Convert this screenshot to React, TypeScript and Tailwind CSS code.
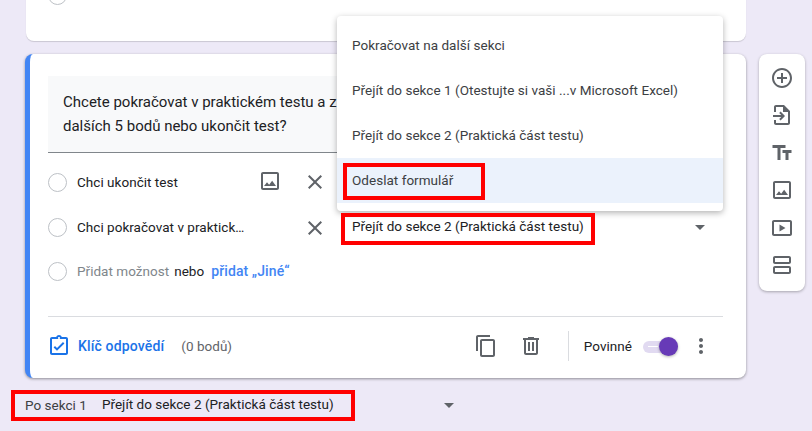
const Ic = ({ d, size = 24, className = "" }: { d: string; size?: number; className?: string }) => (
  <svg width={size} height={size} viewBox="0 0 24 24" fill="currentColor" className={"shrink-0 " + className}>
    <path d={d} />
  </svg>
);

const IMAGE = "M19 5v14H5V5h14m0-2H5c-1.1 0-2 .9-2 2v14c0 1.1.9 2 2 2h14c1.1 0 2-.9 2-2V5c0-1.1-.9-2-2-2zm-4.86 8.86l-3 3.87L9 13.14 6 17h12l-3.86-5.14z";
const CLOSE = "M19 6.41L17.59 5 12 10.59 6.41 5 5 6.41 10.59 12 5 17.59 6.41 19 12 13.41 17.59 19 19 17.59 13.41 12z";
const ADD = "M13 7h-2v4H7v2h4v4h2v-4h4v-2h-4V7zm-1-5C6.48 2 2 6.48 2 12s4.48 10 10 10 10-4.48 10-10S17.52 2 12 2zm0 18c-4.41 0-8-3.59-8-8s3.59-8 8-8 8 3.59 8 8-3.59 8-8 8z";
const IMPORT = "M14 2H6c-1.1 0-2 .9-2 2v5h2V4h7v5h5v11H6v-3H4v3c0 1.1.9 2 2 2h12c1.1 0 2-.9 2-2V8l-6-6zM3 12v2h8.2l-2 2 1.4 1.4 4.4-4.4-4.4-4.4-1.4 1.4 2 2H3z";
const TT = "M2.5 4v3h5v12h3V7h5V4h-13zm19 5h-9v3h3v7h3v-7h3V9z";
const VIDEO = "M20 4H4c-1.1 0-2 .9-2 2v12c0 1.1.9 2 2 2h16c1.1 0 2-.9 2-2V6c0-1.1-.9-2-2-2zm0 14H4V6h16v12zM9.5 8.5v7l6-3.5-6-3.5z";
const SECTION = "M19 3H5c-1.1 0-2 .9-2 2v4c0 1.1.9 2 2 2h14c1.1 0 2-.9 2-2V5c0-1.1-.9-2-2-2zm0 6H5V5h14v4zm0 4H5c-1.1 0-2 .9-2 2v4c0 1.1.9 2 2 2h14c1.1 0 2-.9 2-2v-4c0-1.1-.9-2-2-2zm0 6H5v-4h14v4z";
const COPY = "M16 1H4c-1.1 0-2 .9-2 2v14h2V3h12V1zm3 4H8c-1.1 0-2 .9-2 2v14c0 1.1.9 2 2 2h11c1.1 0 2-.9 2-2V7c0-1.1-.9-2-2-2zm0 16H8V7h11v14z";
const TRASH = "M15 4V3H9v1H4v2h1v13c0 1.1.9 2 2 2h10c1.1 0 2-.9 2-2V6h1V4h-5zm2 15H7V6h10v13zM9 8h2v9H9V8zm4 0h2v9h-2V8z";
const MORE = "M12 8c1.1 0 2-.9 2-2s-.9-2-2-2-2 .9-2 2 .9 2 2 2zm0 2c-1.1 0-2 .9-2 2s.9 2 2 2 2-.9 2-2-.9-2-2-2zm0 6c-1.1 0-2 .9-2 2s.9 2 2 2 2-.9 2-2-.9-2-2-2z";
const KEY = "M19 3h-4.18C14.4 1.84 13.3 1 12 1s-2.4.84-2.82 2H5c-1.1 0-2 .9-2 2v14c0 1.1.9 2 2 2h14c1.1 0 2-.9 2-2V5c0-1.1-.9-2-2-2zm-7 0c.55 0 1 .45 1 1s-.45 1-1 1-1-.45-1-1 .45-1 1-1zm7 16H5V5h14v14zm-1.6-9.6L16 8l-6 6-2-2-1.4 1.4L10 16.8l7.4-7.4z";

const Radio = () => <span className="w-[19px] h-[19px] rounded-full border border-[#bdc1c6] bg-white shrink-0" />;

const Caret = () => <span className="block w-0 h-0 border-x-[5px] border-x-transparent border-t-[5px] border-t-[#5f6368]" />;

const RedBox = ({ className }: { className: string }) => (
  <div className={"absolute border-[4px] border-[#ff0000] " + className} />
);

export default function App() {
  return (
    <div
      className="relative w-[812px] h-[431px] overflow-hidden bg-[#ede9f7] text-[#202124] text-[13.5px] tracking-[0.03px]"
      style={{ fontFamily: "Roboto, sans-serif" }}
    >
      <div className="flex flex-col pl-[25px] w-[812px] -mt-[20px]">
        <div className="w-[720px] h-[61px] ml-px bg-white rounded-lg shadow-[0_1px_1px_rgba(0,0,0,0.15)] pl-[22px] flex flex-col">
          <div className="flex items-center gap-[10px] h-[30px] text-[#3c4043]">
            <Radio />
            <span>Pořadové číslo aktuálního roku od roku 1900</span>
          </div>
        </div>

        <div className="mt-[13px] flex">
          <div className="w-[721px] shrink-0 h-[324px] bg-white rounded-lg shadow-[0_1px_3px_rgba(0,0,0,0.4)] border-l-[5px] border-l-[#4285f4] pl-[18px] pr-[23px] flex flex-col">
            <div className="mt-[22px] h-[77px] shrink-0 bg-[#f8f9fa] border-b border-b-[#80868b] pl-[15px] pt-[14px] text-[15px] leading-[24px] tracking-normal text-[#202124]">
              <div>Chcete pokračovat v praktickém testu a získat</div>
              <div>dalších 5 bodů nebo ukončit test?</div>
            </div>

            <div className="h-[45px] mt-[7px] flex items-center">
              <Radio />
              <span className="ml-[10px] w-[172px] whitespace-nowrap">Chci ukončit test</span>
              <Ic d={IMAGE} className="text-[#5f6368] ml-[9px] -mt-[3px]" />
              <Ic d={CLOSE} className="text-[#5f6368] ml-[21px] -mt-px" />
            </div>

            <div className="h-[45px] flex items-center">
              <Radio />
              <span className="ml-[10px] w-[169px] whitespace-nowrap">Chci pokračovat v praktick…</span>
              <Ic d={CLOSE} className="text-[#5f6368] ml-[57px]" />
              <span className="ml-[25px] -mt-[3px] w-[343px] whitespace-nowrap">Přejít do sekce 2 (Praktická část testu)</span>
              <Caret />
            </div>

            <div className="h-[44px] flex items-center -mt-px">
              <Radio />
              <span className="ml-[10px] text-[#80868b]">Přidat možnost</span>
              <span className="ml-[5px]">nebo</span>
              <span className="ml-[7px] text-[#4285f4] font-medium text-[14px] tracking-[0.1px]">přidat „Jiné“</span>
            </div>

            <div className="mt-[23px] border-t border-t-[#dadce0] flex-1 flex items-center pb-[3px] pr-[10px]">
              <Ic d={KEY} className="text-[#1a73e8] -ml-px" />
              <span className="ml-[7px] text-[#1a73e8] font-medium text-[14px] tracking-[0.15px]">Klíč odpovědí</span>
              <span className="ml-[17px] text-[#5f6368]">(0 bodů)</span>
              <div className="flex-1" />
              <Ic d={COPY} className="text-[#5f6368]" />
              <Ic d={TRASH} className="text-[#5f6368] ml-[21px]" />
              <span className="ml-[25px] w-px h-[30px] bg-[#dadce0]" />
              <span className="ml-[15px]">Povinné</span>
              <div className="relative ml-[11px] w-[35px] h-[12px] rounded-full bg-[#e1daf1] mr-[11px] mt-px">
                <span className="absolute left-[5px] top-[5.5px] w-[10px] h-px bg-white" />
                <span className="absolute right-0 -top-[4px] w-[19px] h-[19px] rounded-full bg-[#673ab7] shadow-[0_1px_3px_rgba(0,0,0,0.3)]" />
              </div>
              <Ic d={MORE} className="text-[#5f6368]" />
            </div>
          </div>

          <div className="shrink-0 ml-[13px] w-[46px] h-[237px] bg-white rounded-lg shadow-[0_1px_3px_rgba(0,0,0,0.3)] flex flex-col items-center text-[#5f6368] pt-[12px] gap-[13.4px]">
            <Ic d={ADD} />
            <Ic d={IMPORT} />
            <Ic d={TT} />
            <Ic d={IMAGE} />
            <Ic d={VIDEO} />
            <Ic d={SECTION} />
          </div>
        </div>

        <div className="mt-[17px] flex items-center h-[20px] whitespace-nowrap">
          <span className="text-[#3c4043]">Po sekci 1</span>
          <span className="ml-[15px] -mt-px">Přejít do sekce 2 (Praktická část testu)</span>
          <span className="ml-[110px]"><Caret /></span>
        </div>
      </div>

      {/* open dropdown menu */}
      <div className="absolute left-[337px] top-[16px] w-[386px] h-[195px] bg-white rounded shadow-[0_2px_6px_rgba(0,0,0,0.3)] py-[8px] flex flex-col text-[#3c4043]">
        <div className="h-[45px] flex items-center pl-[15px] pb-[2px]">Pokračovat na další sekci</div>
        <div className="h-[45px] flex items-center pl-[15px] pb-[2px]">Přejít do sekce 1 (Otestujte si vaši ...v Microsoft Excel)</div>
        <div className="h-[45px] flex items-center pl-[15px] pb-[2px]">Přejít do sekce 2 (Praktická část testu)</div>
        <div className="h-[45px] flex items-center pl-[15px] pb-[2px] bg-[#ebf2fc]">Odeslat formulář</div>
      </div>

      <RedBox className="left-[343px] top-[163px] w-[142px] h-[37px]" />
      <RedBox className="left-[341px] top-[213px] w-[254px] h-[32px]" />
      <RedBox className="left-[11px] top-[390px] w-[344px] h-[31px]" />
    </div>
  );
}
